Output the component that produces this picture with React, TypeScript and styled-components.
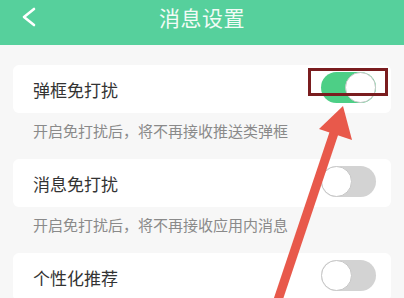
import React from "react";
import styled, { createGlobalStyle } from "styled-components";

const settings = [
  { title: "弹框免打扰", desc: "开启免打扰后，将不再接收推送类弹框", on: true },
  { title: "消息免打扰", desc: "开启免打扰后，将不再接收应用内消息", on: false },
  { title: "个性化推荐", desc: "", on: false },
];

const App: React.FC = () => {
  return (
    <>
      <GlobalStyle />
      <Page>
        <Header>
          <BackButton>
            <svg width="14" height="20" viewBox="0 0 14 20">
              <polyline
                points="12,2 2,10 12,18"
                fill="none"
                stroke="#fff"
                strokeWidth="2.6"
                strokeLinecap="round"
                strokeLinejoin="round"
              />
            </svg>
          </BackButton>
          <Title>消息设置</Title>
        </Header>

        <List>
          {settings.map((s) => (
            <Section key={s.title}>
              <Card>
                <Label>{s.title}</Label>
                <Switch $on={s.on}>
                  <Knob $on={s.on} />
                </Switch>
              </Card>
              {s.desc && <Desc>{s.desc}</Desc>}
            </Section>
          ))}
        </List>

        {/* annotation: red frame + arrow over the first switch */}
        <Frame />
        <Annotation width="404" height="298" viewBox="0 0 404 298">
          <line
            x1="337"
            y1="124"
            x2="276"
            y2="306"
            stroke="#e8594b"
            strokeWidth="9"
          />
          <polygon points="343,106 319,129 352,140" fill="#e8594b" />
        </Annotation>
      </Page>
    </>
  );
};

export default App;

const GlobalStyle = createGlobalStyle`
  html, body {
    margin: 0;
    padding: 0;
    background: #f7f7f7;
  }
  body {
    font-family: "Noto Sans CJK SC", "Noto Sans", sans-serif;
  }
`;

const Page = styled.div`
  position: relative;
  width: 404px;
  height: 298px;
  overflow: hidden;
  background: #f7f7f7;
`;

const Header = styled.header`
  position: relative;
  height: 45px;
  background: #56d09c;
  display: flex;
  align-items: center;
  justify-content: center;
  padding-bottom: 12px;
  box-sizing: border-box;
`;

const BackButton = styled.div`
  position: absolute;
  left: 22px;
  top: 7px;
  display: flex;
`;

const Title = styled.h1`
  margin: 0;
  color: #f2fbf6;
  font-size: 21px;
  font-weight: 400;
  letter-spacing: 0.5px;
`;

const List = styled.div`
  display: flex;
  flex-direction: column;
  padding: 20px 13px 0;
`;

const Section = styled.div`
  display: flex;
  flex-direction: column;
`;

const Card = styled.div`
  height: 48px;
  background: #ffffff;
  border-radius: 6px;
  display: flex;
  align-items: center;
  justify-content: space-between;
  padding: 0 15px 0 20px;
`;

const Label = styled.span`
  font-size: 17px;
  color: #333;
`;

const Switch = styled.div<{ $on: boolean }>`
  position: relative;
  width: 55px;
  height: 31px;
  border-radius: 16px;
  background: ${(p) => (p.$on ? "#4dcf86" : "#d3d3d3")};
  margin-top: -4px;
`;

const Knob = styled.div<{ $on: boolean }>`
  position: absolute;
  top: 0;
  left: ${(p) => (p.$on ? "24px" : "0")};
  width: 31px;
  height: 31px;
  border-radius: 50%;
  box-sizing: border-box;
  background: #fff;
  border: 1px solid #c8c8c8;
`;

const Desc = styled.p`
  margin: 0;
  height: 46px;
  box-sizing: border-box;
  padding: 8px 20px 0;
  font-size: 15px;
  line-height: 20px;
  color: #8a8a8a;
`;

const Frame = styled.div`
  position: absolute;
  left: 308px;
  top: 68px;
  width: 80px;
  height: 28px;
  box-sizing: border-box;
  border: 3px solid #7a1d1f;
`;

const Annotation = styled.svg`
  position: absolute;
  left: 0;
  top: 0;
  pointer-events: none;
`;
